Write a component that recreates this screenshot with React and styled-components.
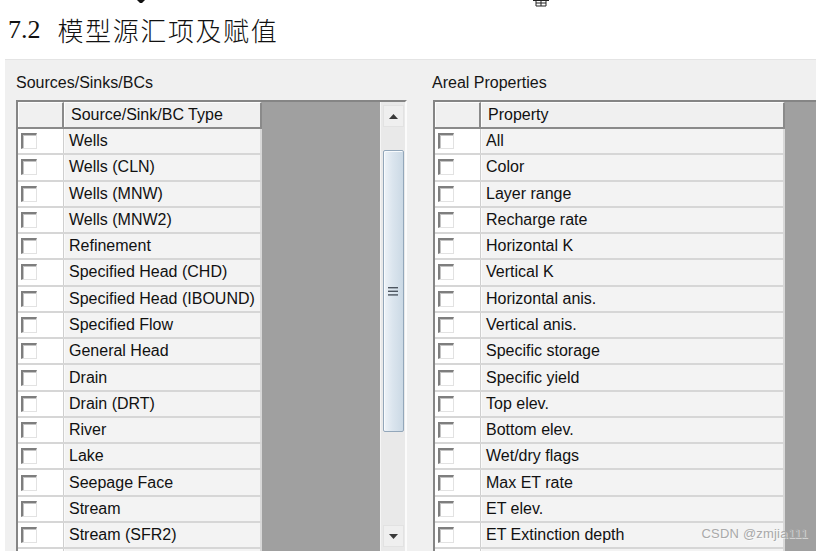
import React from "react";
import styled, { createGlobalStyle } from "styled-components";

const Global = createGlobalStyle`
  html, body { margin: 0; padding: 0; background: #fff; overflow: hidden; }
  body { width: 824px; height: 551px; position: relative; }
`;

const Page = styled.div`
  width: 824px;
  height: 551px;
  display: flex;
  flex-direction: column;
  position: relative;
  overflow: hidden;
`;

const TitleBar = styled.div`
  height: 59px;
  display: flex;
  align-items: center;
  padding-left: 8px;
  box-sizing: border-box;
  font-family: "Liberation Serif", "Noto Sans CJK SC", serif;
  color: #111;
`;

const TitleNum = styled.span`
  font-size: 26px;
  margin-right: 17px;
`;

const TitleText = styled.span`
  font-family: "Noto Sans CJK SC", sans-serif;
  font-weight: 300;
  font-size: 26px;
  letter-spacing: 1.6px;
`;

const Shot = styled.div`
  margin-left: 5px;
  width: 811px;
  height: 492px;
  background: #f0f0f0;
  border-top: 1px solid #e4e4e4;
  box-sizing: border-box;
  display: flex;
  padding-left: 11px;
  overflow: hidden;
`;

const Group = styled.div`
  display: flex;
  flex-direction: column;
  width: ${(p) => p.$w};
  margin-left: ${(p) => p.$ml || "0px"};
  flex: ${(p) => (p.$grow ? "1" : "none")};
`;

const GroupLabel = styled.div`
  font-family: "Liberation Sans", Arial, sans-serif;
  font-size: 16px;
  line-height: 18px;
  color: #151515;
  margin-top: 14px;
  margin-left: ${(p) => p.$ml || "0px"};
  height: 18px;
  margin-bottom: 8px;
`;

const Frame = styled.div`
  display: flex;
  height: 460px;
  border-top: 2px solid #858585;
  border-left: 2px solid #858585;
  border-right: ${(p) => (p.$edge ? "2px solid #fbfbfb" : "none")};
  background: #a0a0a0;
  box-sizing: border-box;
  overflow: hidden;
`;

const Table = styled.div`
  display: flex;
  flex-direction: column;
  width: ${(p) => p.$w};
  flex: none;
  font-family: "Liberation Sans", Arial, sans-serif;
  font-size: 16px;
  color: #111;
`;

const HeaderRow = styled.div`
  display: flex;
  height: 27px;
  flex: none;
  box-sizing: border-box;
  border-bottom: 2px solid #8a8a8a;
  background: #f0f0f0;
`;

const HeaderCell = styled.div`
  box-sizing: border-box;
  width: ${(p) => p.$w || "auto"};
  flex: ${(p) => (p.$w ? "none" : "1")};
  border-top: 1px solid #fdfdfd;
  border-left: 1px solid #fdfdfd;
  border-right: 2px solid #8a8a8a;
  padding-left: 6px;
  display: flex;
  align-items: center;
  white-space: nowrap;
`;

const Row = styled.div`
  display: flex;
  height: 26.27px;
  flex: none;
  box-sizing: border-box;
  border-bottom: 2px solid #d6d6d6;
`;

const CheckCell = styled.div`
  width: 46px;
  flex: none;
  box-sizing: border-box;
  background: #fff;
  border-right: 1px solid #cfcfcf;
  display: flex;
  align-items: center;
  padding-left: 3px;
`;

const Box = styled.span`
  width: 16px;
  height: 16px;
  box-sizing: border-box;
  background: #fff;
  border-top: 2px solid #7e7e7e;
  border-left: 2px solid #7e7e7e;
  border-right: 1px solid #e2e2e2;
  border-bottom: 1px solid #e2e2e2;
  box-shadow: inset 1px 1px 0 #c4c4c4;
`;

const NameCell = styled.div`
  flex: 1;
  box-sizing: border-box;
  background: #f3f3f3;
  border-right: 2px solid #d8d8d8;
  border-left: 1px solid #fafafa;
  padding-left: 4px;
  display: flex;
  align-items: center;
  white-space: nowrap;
`;

const Empty = styled.div`
  flex: 1;
  background: #a0a0a0;
`;

const Scroll = styled.div`
  width: 25px;
  flex: none;
  display: flex;
  flex-direction: column;
  align-items: center;
  background: #e9e9e9;
  border-left: 1px solid #f6f6f6;
  box-sizing: border-box;
  padding: 3px 0 0 0;
`;

const ArrowBtn = styled.div`
  width: 21px;
  height: 22px;
  flex: none;
  box-sizing: border-box;
  border: 1px solid #e2e2e2;
  background: #efefef;
  display: flex;
  align-items: center;
  justify-content: center;
  margin-top: ${(p) => p.$mt || "0px"};
`;

const Thumb = styled.div`
  width: 21px;
  height: 282px;
  margin-top: 23px;
  flex: none;
  box-sizing: border-box;
  border: 1px solid #93a7ba;
  border-radius: 2px;
  background: linear-gradient(to right, #eef3f8 0%, #dbe5ee 45%, #cbd9e5 100%);
  box-shadow: inset 1px 1px 0 #f8fbfd;
  display: flex;
  align-items: center;
  justify-content: center;
`;

const Watermark = styled.div`
  position: absolute;
  right: 16px;
  bottom: 10px;
  font-family: "Liberation Sans", Arial, sans-serif;
  font-size: 13px;
  color: #a9a9a9;
  text-shadow: 1px 1px 0 rgba(255, 255, 255, 0.55);
  letter-spacing: 0.2px;
`;

const Speck = styled.svg`
  position: absolute;
  top: 0;
  left: ${(p) => p.$x};
`;

const leftRows = [
  "Wells",
  "Wells (CLN)",
  "Wells (MNW)",
  "Wells (MNW2)",
  "Refinement",
  "Specified Head (CHD)",
  "Specified Head (IBOUND)",
  "Specified Flow",
  "General Head",
  "Drain",
  "Drain (DRT)",
  "River",
  "Lake",
  "Seepage Face",
  "Stream",
  "Stream (SFR2)",
  "",
];

const rightRows = [
  "All",
  "Color",
  "Layer range",
  "Recharge rate",
  "Horizontal K",
  "Vertical K",
  "Horizontal anis.",
  "Vertical anis.",
  "Specific storage",
  "Specific yield",
  "Top elev.",
  "Bottom elev.",
  "Wet/dry flags",
  "Max ET rate",
  "ET elev.",
  "ET Extinction depth",
  "",
];

function Grid({ title, header, rows, tableW, scroll, labelMl }) {
  return (
    <>
      <GroupLabel $ml={labelMl}>{title}</GroupLabel>
      <Frame $edge={scroll}>
        <Table $w={tableW}>
          <HeaderRow>
            <HeaderCell $w="46px" />
            <HeaderCell>{header}</HeaderCell>
          </HeaderRow>
          {rows.map((r, i) => (
            <Row key={i}>
              <CheckCell>
                <Box />
              </CheckCell>
              <NameCell>{r}</NameCell>
            </Row>
          ))}
        </Table>
        <Empty />
        {scroll && (
          <Scroll>
            <ArrowBtn>
              <svg width="9" height="5" viewBox="0 0 9 5">
                <path d="M0 5 L4.5 0 L9 5 Z" fill="#3a3a3a" />
              </svg>
            </ArrowBtn>
            <Thumb>
              <svg width="10" height="9" viewBox="0 0 10 9">
                <rect x="0" y="0" width="10" height="1.4" fill="#4d5660" />
                <rect x="0" y="3.6" width="10" height="1.4" fill="#4d5660" />
                <rect x="0" y="7.2" width="10" height="1.4" fill="#4d5660" />
              </svg>
            </Thumb>
            <ArrowBtn $mt="93px">
              <svg width="9" height="5" viewBox="0 0 9 5">
                <path d="M0 0 L4.5 5 L9 0 Z" fill="#3a3a3a" />
              </svg>
            </ArrowBtn>
          </Scroll>
        )}
      </Frame>
    </>
  );
}

export default function App() {
  return (
    <Page>
      <Global />
      <Speck $x="136px" width="10" height="4" viewBox="0 0 10 4">
        <path d="M1 0 L9 0 L6 3 L4 3 Z" fill="#111" />
      </Speck>
      <Speck $x="533px" width="16" height="7" viewBox="0 0 16 7">
        <path d="M0 0.5 H16 M3 0 V6 H13 V0 M8 0 V6 M3 3 H13" stroke="#222" strokeWidth="1" fill="none" />
      </Speck>
      <TitleBar>
        <TitleNum>7.2</TitleNum>
        <TitleText>模型源汇项及赋值</TitleText>
      </TitleBar>
      <Shot>
        <Group $w="391px">
          <Grid
            title="Sources/Sinks/BCs"
            header="Source/Sink/BC Type"
            rows={leftRows}
            tableW="244px"
            scroll
          />
        </Group>
        <Group $ml="26px" $grow>
          <Grid
            title="Areal Properties"
            header="Property"
            rows={rightRows}
            tableW="350px"
            labelMl="-1px"
          />
        </Group>
      </Shot>
      <Watermark>CSDN @zmjia111</Watermark>
    </Page>
  );
}
